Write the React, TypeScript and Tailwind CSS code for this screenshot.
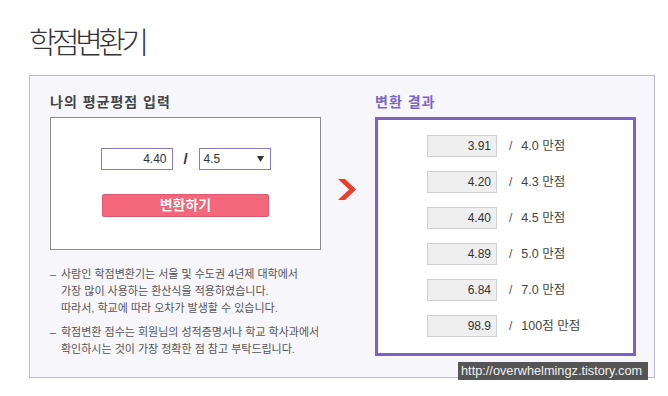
import React from "react";

const KR = "font-['Liberation_Sans','Noto_Sans_CJK_KR',sans-serif]";

const rows = [
  { v: "3.91", t: "4.0 만점" },
  { v: "4.20", t: "4.3 만점" },
  { v: "4.40", t: "4.5 만점" },
  { v: "4.89", t: "5.0 만점" },
  { v: "6.84", t: "7.0 만점" },
  { v: "98.9", t: "100점 만점" },
];

export default function App() {
  return (
    <div className={`relative w-[668px] h-[396px] overflow-hidden bg-white ${KR}`}>
      <h1 className="ml-[29px] pt-[28px] h-[75px] text-[30px] leading-[30px] font-light tracking-[-4.5px] text-[#333]">
        학점변환기
      </h1>
      <div className="ml-[29px] w-[626px] h-[303px] border border-[#bdb8d8] bg-[#f7f6fb] flex pl-[20px] pt-[18px]">
        {/* left column */}
        <div className="w-[271px] flex flex-col">
          <div className="h-[16px] leading-[16px] mb-[7px] text-[14px] font-bold tracking-[1px] text-[#444]">
            나의 평균평점 입력
          </div>
          <div className="h-[133px] border border-[#8c8c8c] bg-white flex flex-col items-center pt-[30px]">
            <div className="flex items-center h-[22px]">
              <div className="w-[72px] h-[22px] border border-[#8b7cc8] bg-white text-right pr-[5px] text-[12px] leading-[20px] text-[#333]">
                4.40
              </div>
              <div className="w-[26px] text-center text-[15px] font-bold text-[#333] leading-[20px]">/</div>
              <div className="relative w-[72px] h-[22px] border border-[#8b7cc8] bg-white pl-[4px] text-[12px] leading-[20px] text-[#333]">
                4.5
                <svg className="absolute right-[6px] top-[7px]" width="7" height="6" viewBox="0 0 7 6">
                  <polygon points="0,0 7,0 3.5,6" fill="#333" />
                </svg>
              </div>
            </div>
            <div className="mt-[24px] w-[167px] h-[23px] rounded-[2px] border border-[#dd5a6d] bg-[#f5687b] flex items-center justify-center text-[14px] font-bold text-white [text-shadow:0_0_1px_rgba(150,30,50,0.5)]">
              변환하기
            </div>
          </div>
          <div className="mt-[16px] text-[11px] leading-[17px] text-[#555]">
            <div className="flex">
              <span className="w-[11px] shrink-0">–</span>
              <div>
                사람인 학점변환기는 서울 및 수도권 4년제 대학에서
                <br />
                가장 많이 사용하는 환산식을 적용하였습니다.
                <br />
                따라서, 학교에 따라 오차가 발생할 수 있습니다.
              </div>
            </div>
            <div className="flex mt-[7px]">
              <span className="w-[11px] shrink-0">–</span>
              <div>
                학점변환 점수는 회원님의 성적증명서나 학교 학사과에서
                <br />
                확인하시는 것이 가장 정확한 점 참고 부탁드립니다.
              </div>
            </div>
          </div>
        </div>
        {/* arrow column */}
        <div className="w-[54px] pt-[85px] pl-[17px]">
          <svg width="18" height="21" viewBox="0 0 18 21">
            <polygon points="0,0 7,0 18,10.5 7,21 0,21 11,10.5" fill="#e6412c" />
          </svg>
        </div>
        {/* right column */}
        <div className="w-[261px] flex flex-col">
          <div className="h-[16px] leading-[16px] mb-[7px] text-[14px] font-bold tracking-[1px] text-[#7a66c6]">
            변환 결과
          </div>
          <div className="h-[239px] border-[3px] border-[#7b62c9] bg-white pt-[15px] flex flex-col gap-[14px]">
            {rows.map((r) => (
              <div key={r.v} className="flex items-center h-[22px] ml-[49px]">
                <div className="w-[70px] h-[22px] border border-[#cfcfcf] bg-[#efefef] text-right pr-[5px] text-[12px] leading-[20px] text-[#333]">
                  {r.v}
                </div>
                <span className="ml-[12px] text-[12px] text-[#555]">/</span>
                <span className="ml-[9px] text-[12.5px] text-[#444]">{r.t}</span>
              </div>
            ))}
          </div>
        </div>
      </div>
      <div className="absolute left-[458px] top-[362px] w-[190px] h-[18px] bg-[#555] text-[#f0f0f0] text-[12.75px] leading-[18px] pl-[3px] font-['Liberation_Sans',sans-serif]">
        http://overwhelmingz.tistory.com
      </div>
    </div>
  );
}
